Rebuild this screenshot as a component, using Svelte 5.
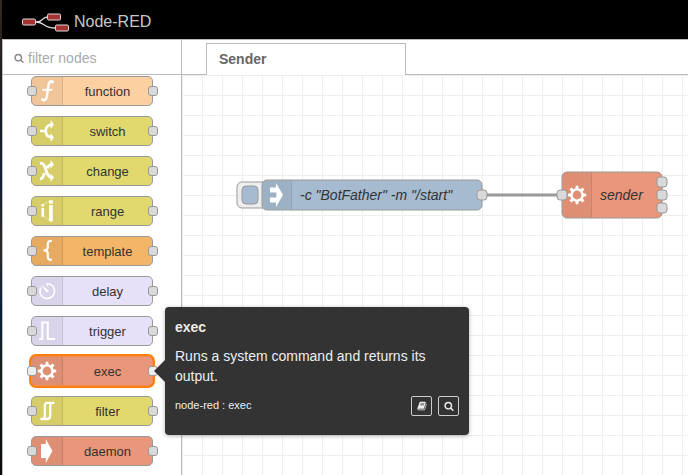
<script>
  const palette = [
    { name: 'function', color: '#fdd0a2' },
    { name: 'switch', color: '#e2d96e' },
    { name: 'change', color: '#e2d96e' },
    { name: 'range', color: '#e2d96e' },
    { name: 'template', color: '#f3b567' },
    { name: 'delay', color: '#e6e0f8' },
    { name: 'trigger', color: '#e6e0f8' },
    { name: 'exec', color: '#e9967a' },
    { name: 'filter', color: '#e2d96e' },
    { name: 'daemon', color: '#e9967a' }
  ];
  const hovered = 'exec';
  const teeth = [0, 45, 90, 135, 180, 225, 270, 315];
  const outputs = [10, 23, 36];
  let query = $state('');
  const visible = $derived(palette.filter((n) => n.name.includes(query.trim().toLowerCase())));
</script>

{#snippet gear()}
  <circle cx="15" cy="15" r="5.6" fill="none" stroke="#fff" stroke-width="2.4" />
  {#each teeth as angle}
    <path d="M13.3 9 L13.7 5.8 H16.3 L16.7 9Z" fill="#fff" stroke="none" transform="rotate({angle} 15 15)" />
  {/each}
{/snippet}

{#snippet searchIcon()}
  <svg class="fa" viewBox="0 0 1792 1792" aria-hidden="true">
    <path fill="currentColor" d="M1216 832q0-185-131.5-316.5t-316.5-131.5-316.5 131.5-131.5 316.5 131.5 316.5 316.5 131.5 316.5-131.5 131.5-316.5zm512 832q0 52-38 90t-90 38q-54 0-90-38l-343-342q-179 124-399 124-143 0-273.5-55.5t-225-150-150-225-55.5-273.5 55.5-273.5 150-225 225-150 273.5-55.5 273.5 55.5 225 150 150 225 55.5 273.5q0 220-124 399l343 343q37 37 37 90z" />
  </svg>
{/snippet}

{#snippet nodeIcon(name)}
  <svg class="icon" viewBox="0 0 30 28" aria-hidden="true">
    <g transform="translate(0 -1)" fill="none" stroke="#fff" stroke-width="2">
      {#if name === 'function'}
        <path d="M21 6.6 C20.6 4.6 17.6 4.6 16.8 7.6 C15.8 11.5 15.6 17 14.8 21 C14.2 24.6 11 25.4 10 23" stroke-width="2.3" />
        <path d="M10.4 13.8 H20.4" />
        <path d="M19.2 5.2h2.2v2.2h-2.2zM9.4 22.2h2.2v2.2H9.4z" fill="#fff" stroke="none" />
      {:else if name === 'switch'}
        <path d="M8 15 H13 M20 8.8 C15.4 8.8 13.8 11 13.8 15 C13.8 19 15.4 21.2 20 21.2" stroke-width="2.6" />
        <path d="M18.6 4 L22 8.6 L18.6 13Z M18.6 17 L22 21.4 L18.6 26Z" fill="#fff" stroke="none" />
      {:else if name === 'change'}
        <path d="M8 7.4 H9.6 C14.6 7.4 13.2 21.4 19.6 21.4" stroke-width="2.8" />
        <path d="M8 22.8 C11 22.8 11.6 19.6 12.4 17 M15 12.4 C15.8 10 17.2 8.6 20 8.6" stroke-width="2.8" />
        <path d="M18.6 4 L22 8.4 L18.6 12.6Z M18.6 17.4 L22 21.6 L18.6 26Z" fill="#fff" stroke="none" />
      {:else if name === 'range'}
        <path d="M9.5 8h2.6v2.4H9.5z M9.5 12h2.6v8.7H9.5z M17 4.2h3.8v3.6H17z M17 9.2h3.8v16.2H17z" fill="#fff" stroke="none" />
        <path d="M12.4 8 L17 5.2 M12.4 20.8 L17 23.8" stroke-width="0.8" stroke-dasharray="1.2 1" />
      {:else if name === 'template'}
        <path d="M19.8 5 H18.6 C16.4 5 15.8 6 15.8 8 V11 C15.8 13.2 14.6 14.4 11.4 14.4 C14.6 14.4 15.8 15.6 15.8 17.8 V20.8 C15.8 22.8 16.4 23.8 18.6 23.8 H19.8" stroke-width="2.2" />
      {:else if name === 'delay'}
        <path d="M15.2 7 V9.8 M15.2 7.7 A7.4 7.4 0 1 1 8.8 11.4" stroke-width="1.5" />
        <path d="M9 8.4 L16.4 14.4 A1.3 1.3 0 0 1 14.6 16.2Z" fill="#fff" stroke="none" />
      {:else if name === 'trigger'}
        <path d="M7.2 23 H10.3 V6.6 H15.8 V23 H23" stroke-width="2" />
      {:else if name === 'exec'}
        {@render gear()}
      {:else if name === 'filter'}
        <path d="M8.4 23 H10.6 C12.2 23 12.8 21.6 12.8 19.6 V10 C12.8 7.6 13.8 6.9 15.4 6.9 H22.4 M10.6 23 H15.4 C17.4 23 18.2 21.8 18.2 19.6 V10 C18.2 7.6 19.2 6.9 20.8 6.9" stroke-width="2.3" />
      {:else}
        <path d="M9 8 H13.8 V3 L20.4 15 L13.8 27 V22 H9Z" fill="#fff" stroke="none" />
      {/if}
    </g>
  </svg>
{/snippet}

<div class="app">
  <header>
    <svg class="logo" viewBox="0 0 48 20" aria-hidden="true">
      <path d="M14 10 C22 10 19 5 26 5 M14 10 C24 10 20 16 33 16" fill="none" stroke="#ddd" stroke-width="1.3" />
      <g fill="#a33332" stroke="#ddd" stroke-width="1">
        <rect x="0.5" y="7" width="13" height="6" rx="1.2" />
        <rect x="25.5" y="2" width="13" height="6" rx="1.2" />
        <rect x="33.5" y="13" width="13" height="6" rx="1.2" />
      </g>
    </svg>
    <span>Node-RED</span>
  </header>
  <div class="workspace">
    <aside>
      <label class="search">
        {@render searchIcon()}
        <input type="text" placeholder="filter nodes" aria-label="filter nodes" bind:value={query} />
      </label>
      <ul>
        {#each visible as node (node.name)}
          <li class:hovered={node.name === hovered} style="background-color: {node.color}">
            <span class="badge">{@render nodeIcon(node.name)}</span>
            <span class="name">{node.name}</span>
            <i class="port in"></i>
            <i class="port out"></i>
            {#if node.name === hovered}
              <div class="popover" role="tooltip">
                <h2>exec</h2>
                <p>Runs a system command and returns its output.</p>
                <div class="meta">
                  <span>node-red : exec</span>
                  <button type="button" aria-label="Open help">
                    <svg class="fa" viewBox="0 0 1792 1792" aria-hidden="true">
                      <path fill="currentColor" d="M1703 478q40 57 18 129l-275 906q-19 64-76.5 107.5t-122.5 43.5h-923q-77 0-148.5-53.5t-99.5-131.5q-24-67-2-127 0-4 3-27t4-37q1-8-3-21.5t-3-19.5q2-11 8-21t16.5-23.5 16.5-23.5q23-38 45-91.5t30-91.5q3-10 .5-30t-.5-28q3-11 17-28t17-23q21-36 42-92t25-90q1-9-2.5-32t.5-28q4-13 22-30.5t22-22.5q19-26 42.5-84.5t27.5-96.5q1-8-3-25.5t-2-26.5q2-8 9-18t18-23 17-21q8-12 16.5-30.5t15-35 16-36 19.5-32 26.5-23.5 36-11.5 47.5 5.5l-1 3q38-9 51-9h761q74 0 114 56t18 130l-274 906q-36 119-71.5 153.5t-128.5 34.5h-869q-27 0-38 15-11 16-1 43 24 70 144 70h923q29 0 56-15.5t35-41.5l300-987q7-22 5-57 38 15 59 43zm-1064 2q-4 13 2 22.5t20 9.5h608q13 0 25.5-9.5t16.5-22.5l21-64q4-13-2-22.5t-20-9.5h-608q-13 0-25.5 9.5t-16.5 22.5zm-83 256q-4 13 2 22.5t20 9.5h608q13 0 25.5-9.5t16.5-22.5l21-64q4-13-2-22.5t-20-9.5h-608q-13 0-25.5 9.5t-16.5 22.5z" />
                    </svg>
                  </button>
                  <button type="button" aria-label="Search for exec nodes">{@render searchIcon()}</button>
                </div>
              </div>
            {/if}
          </li>
        {/each}
      </ul>
    </aside>
    <main>
      <nav>
        <a href="#sender">Sender</a>
      </nav>
      <svg class="canvas" role="img" aria-label="Sender flow">
        <defs>
          <pattern id="grid" width="20" height="20" patternUnits="userSpaceOnUse">
            <path d="M0 0.5 H20 M0.5 0 V20" stroke="#eee" fill="none" />
          </pattern>
        </defs>
        <rect width="100%" height="100%" fill="url(#grid)" />
        <path d="M300 120 H380" stroke="#999" stroke-width="3" />

        <g transform="translate(80 105)">
          <rect x="-25" y="2" width="32" height="26" rx="5" fill="#eee" stroke="#999" />
          <rect x="-20" y="6" width="16" height="18" rx="4" fill="#a6bbcf" stroke="#999" />
          <rect width="220" height="30" rx="5" fill="#a6bbcf" stroke="#999" />
          <path d="M29.5 0.5 H5 a5 5 0 0 0 -4.5 5 V25 a5 5 0 0 0 4.5 4.5 H29.5Z" fill="#000" fill-opacity="0.05" />
          <path d="M29.5 0.5 V29.5" stroke="#000" stroke-opacity="0.1" />
          <path d="M8 7.6 H14 V3 L21 15 L14 27 V22.4 H8 V17.4 H14.4 V12.6 H8Z" fill="#fff" />
          <text x="38" y="20">-c "BotFather" -m "/start"</text>
          <rect class="pin" x="215" y="10" width="10" height="10" rx="3" />
        </g>

        <g transform="translate(380 97)">
          <rect width="100" height="46" rx="5" fill="#e9967a" stroke="#999" />
          <path d="M29.5 0.5 H5 a5 5 0 0 0 -4.5 5 V41 a5 5 0 0 0 4.5 4.5 H29.5Z" fill="#000" fill-opacity="0.05" />
          <path d="M29.5 0.5 V45.5" stroke="#000" stroke-opacity="0.1" />
          <g transform="translate(0 8)">{@render gear()}</g>
          <text x="38" y="28">sender</text>
          <rect class="pin" x="-5" y="18" width="10" height="10" rx="3" />
          {#each outputs as y}
            <rect class="pin" x="95" y={y - 5} width="10" height="10" rx="3" />
          {/each}
        </g>
      </svg>
    </main>
  </div>
</div>

<style>
  :global(body) {
    margin: 0;
  }
  .app {
    box-sizing: border-box;
    display: flex;
    flex-direction: column;
    height: 100vh;
    overflow: hidden;
    padding-left: 2px;
    background: linear-gradient(#33291f, #1b1c22 20%, #102034 38%, #2b2928 52%, #07203c 65%, #14201c 78%, #080b0c) left / 2px 100% no-repeat;
    font-family: 'Liberation Sans', Arial, sans-serif;
    font-size: 14px;
    line-height: 20px;
    color: #333;
  }
  header {
    flex: none;
    display: flex;
    align-items: center;
    gap: 4px;
    height: 39px;
    padding: 4px 20px 0;
    box-sizing: border-box;
    background: #000;
    color: #c7c7c7;
    font-size: 16px;
  }
  .logo {
    width: 48px;
    height: 20px;
  }
  .workspace {
    flex: 1;
    display: flex;
    min-height: 0;
    background: #fff;
    border-top: 1px solid #bbb;
    border-left: 1px solid #bbb;
  }
  aside {
    position: relative;
    z-index: 1;
    flex: none;
    width: 178px;
    border-right: 1px solid #bbb;
  }
  .search {
    display: flex;
    align-items: center;
    gap: 4px;
    box-sizing: border-box;
    height: 35px;
    padding: 2px 11px 0;
    border-bottom: 1px solid #bbb;
    color: #888;
  }
  .fa {
    flex: none;
    width: 10px;
    height: 10px;
  }
  input {
    flex: 1;
    min-width: 0;
    padding: 0;
    border: 0;
    outline: 0;
    background: none;
    font: inherit;
    color: #333;
  }
  input::placeholder {
    color: #aaa;
    opacity: 1;
  }
  ul {
    display: flex;
    flex-direction: column;
    gap: 10px;
    margin: 0;
    padding: 1px 28px;
    list-style: none;
  }
  li {
    position: relative;
    display: flex;
    box-sizing: border-box;
    height: 30px;
    border: 1px solid #999;
    border-radius: 5px;
    font-size: 13px;
  }
  .badge {
    box-sizing: border-box;
    width: 31px;
    border-right: 1px solid rgba(0, 0, 0, 0.1);
    border-radius: 4px 0 0 4px;
    background: rgba(0, 0, 0, 0.05);
  }
  .icon {
    display: block;
    width: 30px;
    height: 28px;
  }
  .name {
    flex: 1;
    line-height: 30px;
    text-align: center;
  }
  .port {
    position: absolute;
    top: 9px;
    box-sizing: border-box;
    width: 10px;
    height: 10px;
    border: 1px solid #999;
    border-radius: 3px;
    background: #d9d9d9;
  }
  .in {
    left: -5px;
  }
  .out {
    right: -6px;
  }
  .hovered {
    border-color: #f08c4c;
    box-shadow: 0 0 0 2px #ff7f0e;
  }
  .hovered .port {
    background: #eee;
  }
  .popover {
    position: absolute;
    left: 133px;
    top: -50px;
    box-sizing: border-box;
    width: 304px;
    padding: 10px;
    border-radius: 4px;
    background: #333;
    box-shadow: 0 1px 4px rgba(0, 0, 0, 0.3);
    color: #eee;
    font-size: 14px;
  }
  .popover::before {
    content: '';
    position: absolute;
    left: -11px;
    top: 53px;
    border: solid transparent;
    border-width: 11px 11px 11px 0;
    border-right-color: #333;
  }
  h2 {
    margin: 0 0 9px;
    font-size: 14px;
    line-height: 20px;
  }
  p {
    margin: 0;
  }
  .meta {
    display: flex;
    align-items: flex-start;
    gap: 6px;
    margin: 10px 0 9px;
    font-size: 11px;
    line-height: 18px;
  }
  .meta span {
    flex: 1;
  }
  button {
    display: flex;
    align-items: center;
    justify-content: center;
    width: 21px;
    height: 20px;
    padding: 0;
    border: 1px solid #ccc;
    border-radius: 2px;
    background: none;
    color: #eee;
  }
  main {
    flex: 1;
    display: flex;
    flex-direction: column;
    min-width: 0;
  }
  nav {
    flex: none;
    display: flex;
    height: 35px;
    padding: 3px 24px 0;
    box-sizing: border-box;
    background: linear-gradient(#bbb, #bbb) bottom / 100% 1px no-repeat;
  }
  nav a {
    box-sizing: border-box;
    width: 200px;
    padding: 5px 12px;
    border: 1px solid #bbb;
    border-bottom: 0;
    background: #fff;
    font-weight: bold;
    color: #666;
    text-decoration: none;
  }
  .canvas {
    flex: 1;
    display: block;
    width: 100%;
    min-height: 0;
  }
  .canvas text {
    font-size: 14px;
    font-style: italic;
    fill: #333;
  }
  .pin {
    fill: #d9d9d9;
    stroke: #999;
  }
</style>
